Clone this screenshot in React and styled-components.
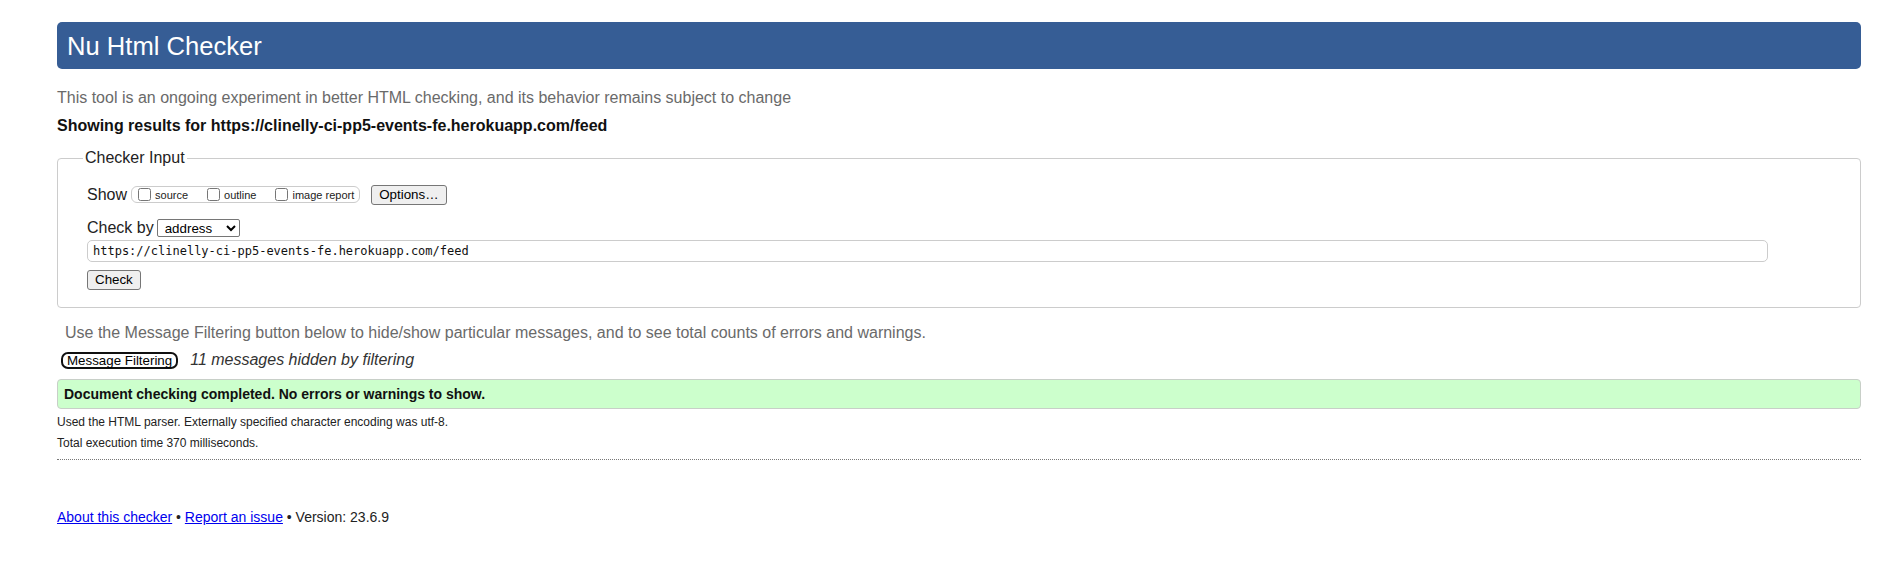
import React from "react";
import styled, { createGlobalStyle } from "styled-components";

const GlobalStyle = createGlobalStyle`
  html, body {
    margin: 0;
    padding: 0;
    background: #ffffff;
  }
  body {
    font-family: "Liberation Sans", Arial, Helvetica, sans-serif;
    color: #222222;
  }
`;

const Page = styled.div`
  padding: 22px 19px 40px 57px;
`;

const Title = styled.h1`
  margin: 0;
  background: #365d95;
  color: #ffffff;
  font-size: 25.6px;
  font-weight: normal;
  line-height: 32px;
  padding: 8px 10px 7px;
  border-radius: 5px;
`;

const Lead = styled.p`
  margin: ${(p) => p.$top}px 0 0 ${(p) => p.$indent || 0}px;
  font-size: 16px;
  line-height: ${(p) => p.$lh || 19.2}px;
  color: #6a6a6a;
`;

const Showing = styled.p`
  margin: 9px 0 0;
  font-size: 16px;
  font-weight: bold;
  line-height: 19.2px;
  color: #111111;
`;

const Fieldset = styled.fieldset`
  margin: 14px 0 0;
  padding: 17.5px 28px 17px 29px;
  border: 1px solid #cccccc;
  border-radius: 4px;
  min-width: 0;
`;

const Legend = styled.legend`
  margin-left: -4px;
  padding: 0 2px;
  font-size: 16px;
  line-height: 18px;
  color: #222222;
`;

const Row = styled.div`
  display: flex;
  align-items: center;
  gap: ${(p) => p.$gap || 0}px;
  margin-top: ${(p) => p.$top || 0}px;
  height: ${(p) => p.$h}px;
`;

const Label = styled.span`
  font-size: 16px;
  line-height: 18.4px;
  color: #222222;
`;

const OptionGroup = styled.span`
  display: inline-flex;
  align-items: center;
  box-sizing: border-box;
  height: 17px;
  margin-left: 4px;
  padding: 0 5px 0 6px;
  border: 1px solid #cccccc;
  border-radius: 6px;
`;

const CheckLabel = styled.label`
  display: inline-flex;
  align-items: flex-end;
  gap: 4px;
  margin-right: ${(p) => (p.$last ? 0 : 19)}px;
  font-size: 11px;
  line-height: 12px;
  color: #222222;
`;

const Box = styled.input`
  margin: 0;
  width: 13px;
  height: 13px;
`;

const Button = styled.button`
  box-sizing: border-box;
  height: 20px;
  margin-left: ${(p) => p.$left || 0}px;
  padding: 0 7px;
  font-family: "Liberation Sans", Arial, sans-serif;
  font-size: 13.333px;
  line-height: 16px;
  color: #000000;
  background: #efefef;
  border: 1px solid #767676;
  border-radius: 3px;
`;

const Select = styled.select`
  box-sizing: border-box;
  width: 83px;
  height: 18px;
  padding: 0 0 0 3px;
  font-family: "Liberation Sans", Arial, sans-serif;
  font-size: 13.333px;
  color: #000000;
  background: #ffffff;
  border: 1px solid #767676;
  border-radius: 2px;
`;

const UrlWrap = styled.div`
  margin-top: 3px;
  padding-right: 64px;
`;

const UrlInput = styled.input`
  display: block;
  box-sizing: border-box;
  width: 100%;
  height: 22px;
  margin: 0;
  padding: 0 5px;
  font-family: "DejaVu Sans Mono", "Liberation Mono", monospace;
  font-size: 12px;
  color: #111111;
  background: #ffffff;
  border: 1px solid #cccccc;
  border-radius: 5px;
`;

const CheckRow = styled.div`
  margin-top: 8px;
  display: flex;
`;

const FilterRow = styled.div`
  display: flex;
  align-items: center;
  margin-top: 8.5px;
  height: 18.4px;
`;

const FilterButton = styled.button`
  box-sizing: border-box;
  height: 17px;
  margin-left: 4px;
  padding: 0 4px;
  font-family: "Liberation Sans", Arial, sans-serif;
  font-size: 13.333px;
  line-height: 13px;
  color: #000000;
  background: #ffffff;
  border: 2px solid #101010;
  border-radius: 7px;
`;

const HiddenNote = styled.span`
  margin-left: 12px;
  font-size: 16px;
  font-style: italic;
  line-height: 18.4px;
  color: #333333;
`;

const Success = styled.div`
  margin-top: 9px;
  padding: 6px;
  font-size: 14px;
  font-weight: bold;
  line-height: 16px;
  color: #111111;
  background: #ccffcc;
  border: 1px solid #c8cfc8;
  border-radius: 4px;
`;

const Details = styled.div`
  margin-top: 3.5px;
  font-size: 12px;
  line-height: 21px;
  color: #222222;
`;

const Line = styled.p`
  margin: 0;
`;

const Rule = styled.hr`
  margin: 5px 0 0;
  height: 0;
  border: 0;
  border-top: 1px dotted #777777;
`;

const Footer = styled.p`
  margin: 49px 0 0;
  font-size: 14px;
  line-height: 16.8px;
  color: #222222;
`;

const Link = styled.a`
  color: #0000ee;
  text-decoration: underline;
`;

export default function App() {
  const url = "https://clinelly-ci-pp5-events-fe.herokuapp.com/feed";
  return (
    <>
      <GlobalStyle />
      <Page>
        <Title>Nu Html Checker</Title>
        <Lead $top={19}>
          This tool is an ongoing experiment in better HTML checking, and its behavior remains subject to change
        </Lead>
        <Showing>Showing results for {url}</Showing>

        <Fieldset>
          <Legend>Checker Input</Legend>
          <Row $h={20}>
            <Label>Show</Label>
            <OptionGroup>
              <CheckLabel>
                <Box type="checkbox" />
                source
              </CheckLabel>
              <CheckLabel>
                <Box type="checkbox" />
                outline
              </CheckLabel>
              <CheckLabel $last>
                <Box type="checkbox" />
                image report
              </CheckLabel>
            </OptionGroup>
            <Button type="button" $left={11}>Options…</Button>
          </Row>
          <Row $h={18.4} $top={14} $gap={3}>
            <Label>Check by</Label>
            <Select defaultValue="address">
              <option value="address">address</option>
              <option value="file">file upload</option>
              <option value="text">text input</option>
            </Select>
          </Row>
          <UrlWrap>
            <UrlInput type="text" defaultValue={url} />
          </UrlWrap>
          <CheckRow>
            <Button type="button">Check</Button>
          </CheckRow>
        </Fieldset>

        <Lead $top={16} $indent={8} $lh={18.4}>
          Use the Message Filtering button below to hide/show particular messages, and to see total counts of errors and warnings.
        </Lead>
        <FilterRow>
          <FilterButton type="button">Message Filtering</FilterButton>
          <HiddenNote>11 messages hidden by filtering</HiddenNote>
        </FilterRow>

        <Success>Document checking completed. No errors or warnings to show.</Success>

        <Details>
          <Line>Used the HTML parser. Externally specified character encoding was utf-8.</Line>
          <Line>Total execution time 370 milliseconds.</Line>
        </Details>
        <Rule />

        <Footer>
          <Link href="#about">About this checker</Link> • <Link href="#issue">Report an issue</Link> • Version: 23.6.9
        </Footer>
      </Page>
    </>
  );
}
